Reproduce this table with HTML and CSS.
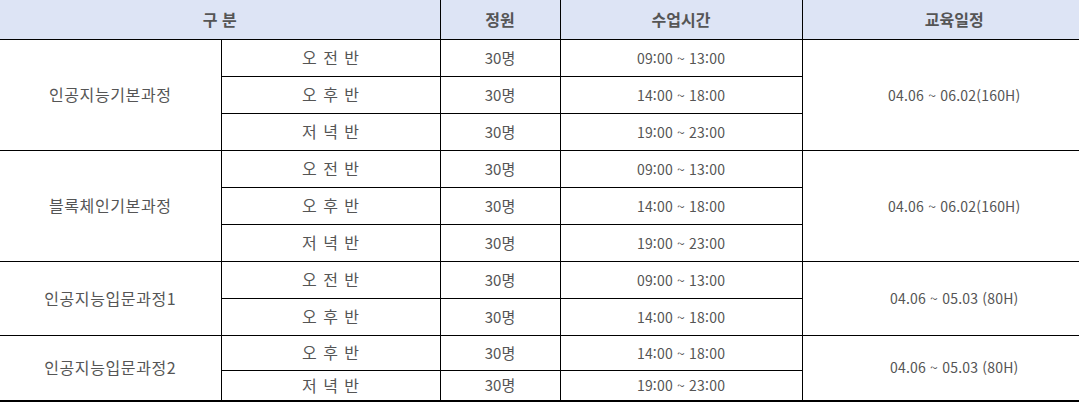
FILE: index.html
```html
<!DOCTYPE html>
<html lang="ko">
<head>
<meta charset="utf-8">
<link rel="stylesheet" href="styles.css">
</head>
<body>
<table class="schedule">
  <colgroup>
    <col class="c1"><col class="c2"><col class="c3"><col class="c4"><col class="c5">
  </colgroup>
  <thead>
    <tr class="head">
      <th colspan="2">구 분</th>
      <th>정원</th>
      <th>수업시간</th>
      <th class="sched">교육일정</th>
    </tr>
  </thead>
  <tbody>
    <tr class="r">
      <td rowspan="3" class="name">인공지능기본과정</td>
      <td class="ban">오 전 반</td><td class="cnt">30명</td><td class="num">09:00 ~ 13:00</td>
      <td rowspan="3" class="num sched">04.06 ~ 06.02(160H)</td>
    </tr>
    <tr class="r"><td class="ban">오 후 반</td><td class="cnt">30명</td><td class="num">14:00 ~ 18:00</td></tr>
    <tr class="r"><td class="ban">저 녁 반</td><td class="cnt">30명</td><td class="num">19:00 ~ 23:00</td></tr>
    <tr class="r">
      <td rowspan="3" class="name">블록체인기본과정</td>
      <td class="ban">오 전 반</td><td class="cnt">30명</td><td class="num">09:00 ~ 13:00</td>
      <td rowspan="3" class="num sched">04.06 ~ 06.02(160H)</td>
    </tr>
    <tr class="r"><td class="ban">오 후 반</td><td class="cnt">30명</td><td class="num">14:00 ~ 18:00</td></tr>
    <tr class="r"><td class="ban">저 녁 반</td><td class="cnt">30명</td><td class="num">19:00 ~ 23:00</td></tr>
    <tr class="r">
      <td rowspan="2" class="name">인공지능입문과정1</td>
      <td class="ban">오 전 반</td><td class="cnt">30명</td><td class="num">09:00 ~ 13:00</td>
      <td rowspan="2" class="num sched">04.06 ~ 05.03 (80H)</td>
    </tr>
    <tr class="r"><td class="ban">오 후 반</td><td class="cnt">30명</td><td class="num">14:00 ~ 18:00</td></tr>
    <tr class="r r9">
      <td rowspan="2" class="name last">인공지능입문과정2</td>
      <td class="ban">오 후 반</td><td class="cnt">30명</td><td class="num">14:00 ~ 18:00</td>
      <td rowspan="2" class="last num sched">04.06 ~ 05.03 (80H)</td>
    </tr>
    <tr class="r r10 lastrow"><td class="ban">저 녁 반</td><td class="cnt">30명</td><td class="num">19:00 ~ 23:00</td></tr>
  </tbody>
</table>
</body>
</html>
```
FILE: styles.css
```css
html, body {
  margin: 0;
  padding: 0;
  background: #fff;
}
body {
  font-family: "Noto Sans CJK KR", "Noto Sans", sans-serif;
  font-size: 16px;
  color: #555;
}
.schedule {
  border-collapse: collapse;
  table-layout: fixed;
  width: 1079px;
}
.c1 { width: 221px; }
.c2 { width: 219px; }
.c3 { width: 120px; }
.c4 { width: 242px; }
.c5 { width: 277px; }
.schedule th,
.schedule td {
  padding: 0;
  text-align: center;
  vertical-align: middle;
  border: 1px solid #000;
  line-height: 1.2;
  white-space: nowrap;
}
.schedule th {
  background: #dde4f5;
  font-weight: 700;
  color: #555;
  border-top: none;
  height: 39px;
}
.schedule .sched { padding-left: 27px; }
.schedule td.name { letter-spacing: 0.6px; }
.schedule td.ban { word-spacing: 2px; }
.schedule td.cnt { font-size: 15px; }
.schedule td.num { font-size: 14px; letter-spacing: 0.2px; }
.schedule tr > :first-child { border-left: none; }
.schedule tr > :last-child { border-right: none; }
.schedule tr.r { height: 37px; }
.schedule tr.r9 { height: 35px; }
.schedule tr.r10 { height: 30px; }
.schedule tr.lastrow td,
.schedule td.last { border-bottom: 2px solid #000; }
.schedule .r > td[rowspan] + td,
.schedule .r > td:first-child:not([rowspan]) { border-left: 1px solid #000; }
```
